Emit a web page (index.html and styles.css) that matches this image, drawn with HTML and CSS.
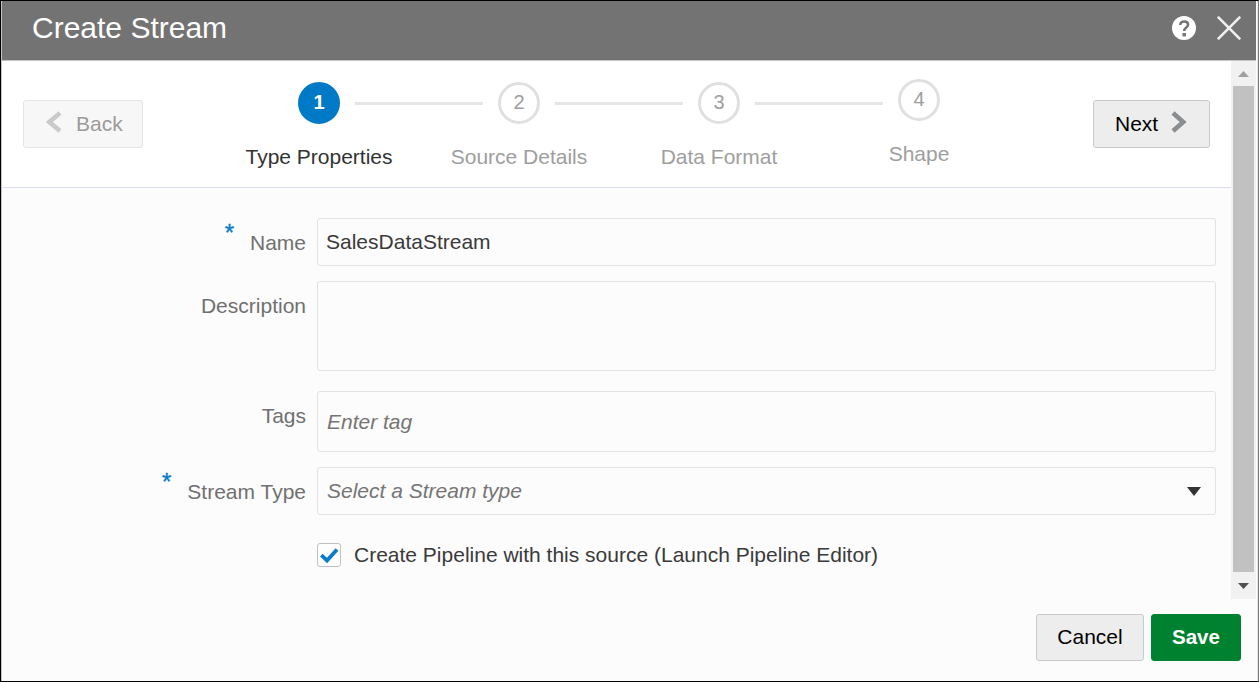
FILE: index.html
```html
<!DOCTYPE html>
<html lang="en">
<head>
<meta charset="utf-8">
<title>Create Stream</title>
<link rel="stylesheet" href="styles.css">
</head>
<body>
<div class="dialog">
  <header class="titlebar">
    <h1 class="title">Create Stream</h1>
    <svg class="help" width="24" height="24" viewBox="0 0 24 24"><circle cx="12" cy="12" r="12" fill="#fff"/><path d="M8.200 9C8.200 6.600 9.700 5.600 12.200 5.600s3.900 1.200 3.900 3.200c0 2.700-3.900 2.900-3.900 6.200" fill="none" stroke="#737373" stroke-width="2.500"/><rect x="10.500" y="17" width="3.400" height="3.400" fill="#737373"/></svg>
    <svg class="close" width="24" height="24" viewBox="0 0 24 24"><path d="M.8 .8L23.200 23.200M23.200 .8L.8 23.200" stroke="#f0f0f0" stroke-width="2.600"/></svg>
  </header>
  <div class="body">
    <main class="content">
      <nav class="wizard">
        <button class="btn back" type="button"><svg width="16" height="22" viewBox="0 0 16 22"><path d="M14 2L3.300 11L14 20" fill="none" stroke="#c9cbcb" stroke-width="4.600"/></svg><span>Back</span></button>
        <ol class="train">
          <li class="step current"><span class="dot">1</span><span class="label">Type Properties</span></li>
          <li class="line"></li>
          <li class="step"><span class="dot">2</span><span class="label">Source Details</span></li>
          <li class="line"></li>
          <li class="step"><span class="dot">3</span><span class="label">Data Format</span></li>
          <li class="line"></li>
          <li class="step last"><span class="dot">4</span><span class="label">Shape</span></li>
        </ol>
        <button class="btn next" type="button"><span>Next</span><svg width="16" height="22" viewBox="0 0 16 22"><path d="M2 2L12.200 11L2 20" fill="none" stroke="#8b8e90" stroke-width="4.600"/></svg></button>
      </nav>
      <form class="form">
        <label class="required"><span class="req">*</span>Name</label>
        <div class="field short"><span class="value">SalesDataStream</span></div>
        <label>Description</label>
        <div class="field area"></div>
        <label>Tags</label>
        <div class="field tags"><span class="hint">Enter tag</span></div>
        <label class="required"><span class="req">*</span>Stream Type</label>
        <div class="field short"><span class="hint">Select a Stream type</span><svg class="caret" width="14" height="9" viewBox="0 0 14 9"><path d="M0 0H14L7 9Z" fill="#333"/></svg></div>
        <div class="check"><span class="box"><svg width="22" height="22" viewBox="0 0 22 22"><path d="M3.300 11.200L9 16.500L19 5.500" fill="none" stroke="#0a7ccb" stroke-width="3.800"/></svg></span><span class="checktext">Create Pipeline with this source (Launch Pipeline Editor)</span></div>
      </form>
    </main>
    <aside class="scroll">
      <svg class="up" width="11" height="6" viewBox="0 0 11 6"><path d="M0 6H11L5.500 0Z" fill="#a0a0a0"/></svg>
      <div class="thumb"></div>
      <svg class="down" width="11" height="6" viewBox="0 0 11 6"><path d="M0 0H11L5.500 6Z" fill="#505050"/></svg>
    </aside>
  </div>
  <footer class="footer">
    <button class="btn cancel" type="button">Cancel</button>
    <button class="btn save" type="button">Save</button>
  </footer>
</div>
</body>
</html>
```
FILE: styles.css
```css
* { box-sizing: border-box; }
body { margin: 0; background: #000; font-family: "Liberation Sans", Arial, sans-serif; font-size: 21px; color: #3a3a3a; }
svg { display: block; flex: none; }
.dialog { width: 1259px; height: 682px; border: 1px solid #000; border-right-color: #777; display: flex; flex-direction: column; background: #fcfcfc; box-shadow: inset 1px 0 #c4c4c4, inset -1px 0 #e8e8e8; }
.titlebar { height: 60px; flex: none; margin: 0 2px 0 1px; background: #737373; border-bottom: 1px solid #c4c4c4; display: flex; padding: 15px 15px 0 30px; }
.title { margin: -6px auto 0 0; color: #fff; font-size: 30px; line-height: 36px; font-weight: 400; }
.close { margin-left: 21px; }
.body { display: flex; height: 538px; flex: none; margin: 0 2px 0 1px; }
.content { width: 1229px; flex: none; }
.wizard { height: 127px; background: #fff; border-bottom: 1px solid #d8dfe6; display: flex; align-items: flex-start; }
.btn { font: inherit; display: flex; align-items: center; border: 1px solid #c9c9c9; border-radius: 3px; background: #ededed; color: #000; padding: 0; line-height: 46px; }
.back { width: 120px; height: 48px; margin: 39px 0 0 21px; border-color: #e4e4e4; background: #f7f7f7; color: #9b9b9b; padding-left: 22px; }
.back span { margin-left: 14px; }
.next { width: 117px; height: 48px; margin: 39px 21px 0 auto; padding-left: 21px; }
.next svg { margin-left: 13px; }
.back svg, .next svg { margin-bottom: 4px; }
.train { list-style: none; display: flex; margin: 21px 0 0 140px; padding: 0; width: 732px; }
.step { width: 42px; margin: 0 15px; display: flex; flex-direction: column; align-items: center; color: #9e9e9e; flex: none; }
.dot { width: 42px; height: 42px; border: 3px solid #dfe1e1; border-radius: 50%; font-size: 20px; line-height: 34px; text-align: center; flex: none; }
.label { white-space: nowrap; margin-top: 22px; line-height: 22px; }
.current { color: #333; }
.current .dot { background: #007ac7; border-color: #007ac7; color: #fff; font-weight: 700; }
.line { width: 128px; height: 3px; background: #e4e5e5; margin-top: 20px; flex: none; }
.last { margin-top: -3px; }
.form { display: grid; grid-template-columns: 304px 899px; grid-template-rows: 48px 95px 61px 48px 24px; column-gap: 11px; row-gap: 15px; padding-top: 30px; align-items: start; }
.form label { text-align: right; line-height: 24px; padding-top: 13px; color: #707070; }
.form .required { display: flex; justify-content: flex-end; }
.field { border: 1px solid #e2e2e2; border-radius: 3px; display: flex; align-items: center; padding: 0 9px; height: 48px; }
.area { height: 90px; }
.tags { height: 61px; padding-top: 1px; }
.req { color: #0a7ccb; font-size: 24px; margin: -10px 16px 0 0; -webkit-text-stroke: .4px #0a7ccb; }
.value { margin-left: -1px; }
.hint { font-style: italic; color: #757575; }
.caret { margin-left: auto; margin-right: 5px; }
.check { grid-column: 2; display: flex; align-items: center; height: 24px; margin-top: 13px; }
.box { width: 24px; height: 24px; border: 1px solid #c0c0c0; border-radius: 3px; background: #fff; }
.checktext { margin-left: 13px; white-space: nowrap; }
.scroll { width: 25px; background: #f1f1f1; display: flex; flex-direction: column; align-items: center; }
.up { margin-top: 10px; }
.thumb { width: 21px; height: 486px; margin-top: 9px; background: #c1c1c1; }
.down { margin-top: 11px; }
.footer { display: flex; justify-content: flex-end; padding: 15px 17px 0; gap: 7px; }
.footer .btn { height: 47px; justify-content: center; line-height: 44px; padding-bottom: 1px; }
.cancel { width: 108px; }
.footer .save { width: 90px; background: #00812f; border-color: #00812f; color: #fff; font-weight: 700; font-size: 20.500px; }
```
